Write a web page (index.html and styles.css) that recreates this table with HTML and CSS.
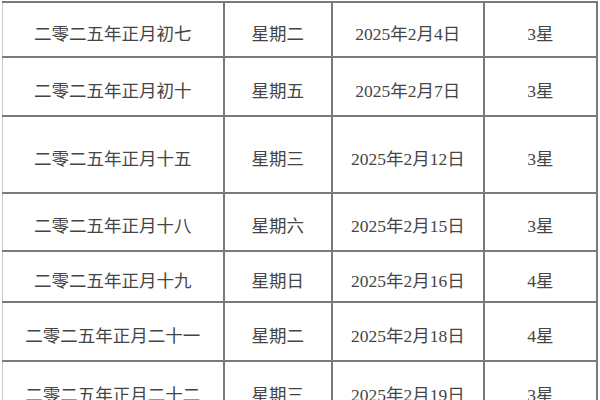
FILE: index.html
```html
<!DOCTYPE html>
<html lang="zh-CN">
<head>
<meta charset="utf-8">
<title>2025年正月日期</title>
<link rel="stylesheet" href="styles.css">
</head>
<body>
<table class="dates">
  <colgroup>
    <col class="c-lunar">
    <col class="c-week">
    <col class="c-date">
    <col class="c-star">
  </colgroup>
  <tbody>
    <tr class="r1"><td>二零二五年正月初七</td><td>星期二</td><td>2025年2月4日</td><td>3星</td></tr>
    <tr class="r2"><td>二零二五年正月初十</td><td>星期五</td><td>2025年2月7日</td><td>3星</td></tr>
    <tr class="r3"><td>二零二五年正月十五</td><td>星期三</td><td>2025年2月12日</td><td>3星</td></tr>
    <tr class="r4"><td>二零二五年正月十八</td><td>星期六</td><td>2025年2月15日</td><td>3星</td></tr>
    <tr class="r5"><td>二零二五年正月十九</td><td>星期日</td><td>2025年2月16日</td><td>4星</td></tr>
    <tr class="r6"><td>二零二五年正月二十一</td><td>星期二</td><td>2025年2月18日</td><td>4星</td></tr>
    <tr class="r7"><td>二零二五年正月二十二</td><td>星期三</td><td>2025年2月19日</td><td>3星</td></tr>
  </tbody>
</table>
</body>
</html>
```

FILE: styles.css
```css
html, body {
  margin: 0;
  padding: 0;
  background: #ffffff;
}

body {
  overflow: hidden;
  height: 400px;
}

.dates {
  border-collapse: collapse;
  table-layout: fixed;
  width: 596px;
  margin: 1px 0 0 2px;
  font-family: "Liberation Serif", "Noto Sans CJK SC", serif;
  font-size: 17.5px;
  color: #454545;
}

.c-lunar { width: 221px; }
.c-week { width: 108px; }
.c-date { width: 152px; }
.c-star { width: 113px; }

.dates td {
  border: 2px solid #7a7a7a;
  text-align: center;
  vertical-align: middle;
  padding: 5px 0 0 0;
  white-space: nowrap;
  overflow: hidden;
}

.dates td:first-child {
  border-left: 1px solid #c9ccd2;
}

.r1 { height: 55px; }
.r2 { height: 59px; }
.r3 { height: 77px; }
.r4 { height: 58px; }
.r5 { height: 51px; }
.r6 { height: 59px; }
.r7 { height: 60px; }
```
